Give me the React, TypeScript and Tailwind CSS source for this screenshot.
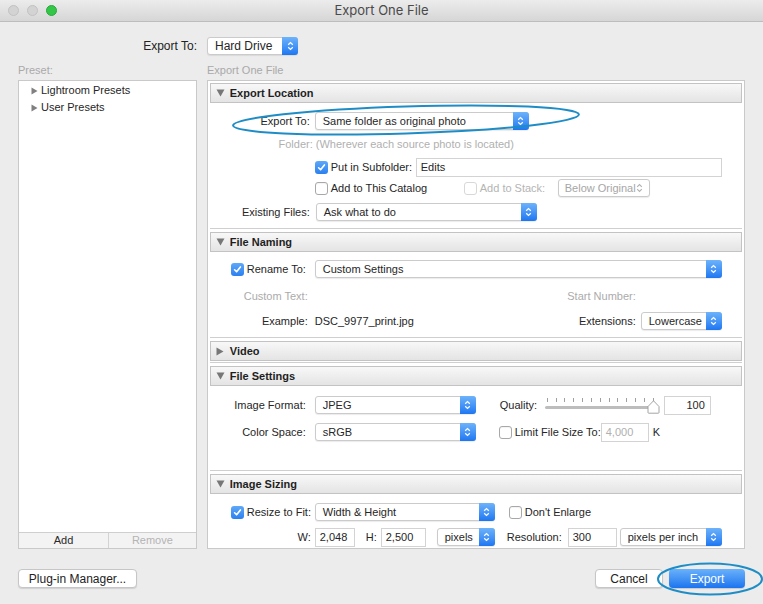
import React from "react";

const Check = ({ checked = false, disabled = false }: { checked?: boolean; disabled?: boolean }) =>
  checked ? (
    <div className="w-[13px] h-[13px] rounded-[3px] bg-gradient-to-b from-[#5ea8f9] to-[#2b80ef] flex items-center justify-center shrink-0">
      <svg width="9" height="9" viewBox="0 0 9 9">
        <path d="M1.6 4.8 L3.6 6.8 L7.4 1.9" stroke="white" strokeWidth="1.6" fill="none" strokeLinecap="round" strokeLinejoin="round" />
      </svg>
    </div>
  ) : disabled ? (
    <div className="w-[13px] h-[13px] rounded-[3px] bg-white border border-[#d8d8d8] shrink-0" />
  ) : (
    <div className="w-[13px] h-[13px] rounded-[3px] bg-white border border-[#a8a8a8] shadow-[inset_0_1px_1px_rgba(0,0,0,0.05)] shrink-0" />
  );

const Stepper = () => (
  <div className="w-[16px] -my-px -mr-px rounded-r-[3px] bg-gradient-to-b from-[#6db3fa] to-[#1c76f1] flex items-center justify-center shrink-0">
    <svg width="7" height="10" viewBox="0 0 7 10">
      <path d="M1.2 3.8 L3.5 1.6 L5.8 3.8 M1.2 6.2 L3.5 8.4 L5.8 6.2" stroke="white" strokeWidth="1.2" fill="none" />
    </svg>
  </div>
);

const GrayStepper = () => (
  <div className="w-[13px] flex items-center justify-start shrink-0">
    <svg width="7" height="10" viewBox="0 0 7 10">
      <path d="M1.2 3.8 L3.5 1.6 L5.8 3.8 M1.2 6.2 L3.5 8.4 L5.8 6.2" stroke="#b0b0b0" strokeWidth="1.1" fill="none" />
    </svg>
  </div>
);

const Popup = ({ text, className = "", disabled = false }: { text: string; className?: string; disabled?: boolean }) => (
  <div
    className={`flex h-[18px] items-stretch border border-[#cbcbcb] rounded-[3px] bg-white shadow-[0_1px_1px_rgba(0,0,0,0.08)] shrink-0 ${className}`}
  >
    <span
      className={`flex-1 flex items-center whitespace-nowrap ${disabled ? "text-[#a6a6a6] pl-[6px]" : "text-[#262626] pl-[7px] overflow-hidden"}`}
    >
      {text}
    </span>
    {disabled ? <GrayStepper /> : <Stepper />}
  </div>
);

const Field = ({ text, className = "", disabled = false }: { text: string; className?: string; disabled?: boolean }) => (
  <div
    className={`h-[19px] flex items-center border border-[#d3d3d3] bg-white shrink-0 px-[4px] ${disabled ? "text-[#b0b0b0]" : "text-[#262626]"} ${className}`}
  >
    {text}
  </div>
);

const Header = ({ title, open = true }: { title: string; open?: boolean }) => (
  <div className="h-[20px] border border-[#c3c3c3] bg-gradient-to-b from-[#f8f8f8] to-[#e4e4e4] flex items-center pl-[5px] font-bold text-[#1e1e1e]">
    <div className="w-[14px] flex items-center justify-start">
      {open ? (
        <svg width="9" height="8" viewBox="0 0 9 8">
          <path d="M0.5 0.5 L8.5 0.5 L4.5 7.5 Z" fill="#777" />
        </svg>
      ) : (
        <svg width="8" height="9" viewBox="0 0 8 9">
          <path d="M0.5 0.5 L7.5 4.5 L0.5 8.5 Z" fill="#777" />
        </svg>
      )}
    </div>
    <span>{title}</span>
  </div>
);

const Line = () => <div className="h-px bg-[#cfcfcf] mb-[3px]" />;

const Slider = () => (
  <div className="relative w-[115px] h-[18px] shrink-0">
    <div className="absolute left-0 right-[4px] top-[2px] flex justify-between px-[2px]">
      {Array.from({ length: 13 }).map((_, i) => (
        <div key={i} className="w-px h-[4px] bg-[#a0a0a0]" />
      ))}
    </div>
    <div className="absolute left-0 right-[6px] top-[10px] h-[3px] rounded-full bg-[#bdbdbd]" />
    <svg className="absolute right-[0px] top-[4px]" width="13" height="14" viewBox="0 0 13 14">
      <path d="M6.5 0.8 L12 6.5 L12 12.5 Q12 13.2 11.3 13.2 L1.7 13.2 Q1 13.2 1 12.5 L1 6.5 Z" fill="white" stroke="#9a9a9a" strokeWidth="0.9" />
    </svg>
  </div>
);

const Btn = ({ text, className = "" }: { text: string; className?: string }) => (
  <div
    className={`h-[19px] flex items-center justify-center bg-white border border-[#c6c6c6] rounded-[4px] shadow-[0_1px_1px_rgba(0,0,0,0.12)] text-[12px] text-[#222] ${className}`}
  >
    {text}
  </div>
);

export default function App() {
  return (
    <div className="relative w-[763px] h-[604px] bg-[#ececec] overflow-hidden font-['Liberation_Sans',_Arial,_sans-serif] text-[11px] text-[#262626]">
      {/* Title bar */}
      <div className="relative h-[22px] bg-gradient-to-b from-[#ececec] to-[#d6d6d6] border-b border-[#bdbdbd] flex items-center">
        <div className="flex items-center gap-[8px] pl-[8px]">
          <div className="w-[11px] h-[11px] rounded-full bg-[#d3d3d3] border border-[#c2c2c2]" />
          <div className="w-[11px] h-[11px] rounded-full bg-[#d3d3d3] border border-[#c2c2c2]" />
          <div className="w-[11px] h-[11px] rounded-full bg-[#33c748] border border-[#2aa83c]" />
        </div>
        <div className="absolute inset-0 flex items-center justify-center text-[13px] text-[#4a4a4a] font-['Inter',_sans-serif]">
          Export One File
        </div>
      </div>

      {/* Export To row */}
      <div className="flex items-center h-[18px] mt-[15px]">
        <div className="w-[197px] text-right text-[12px] text-[#222]">Export To:</div>
        <Popup text="Hard Drive" className="ml-[10px] w-[91px] text-[12px]" />
      </div>

      {/* Labels */}
      <div className="flex mt-[9px] h-[12px] px-[18px] text-[#a9a9a9] leading-[12px]">
        <div className="w-[189px]">Preset:</div>
        <div>Export One File</div>
      </div>

      {/* Main */}
      <div className="flex mt-[4px] px-[18px] h-[469px]">
        {/* Presets */}
        <div className="w-[179px] flex flex-col border border-[#c9c9c9] bg-white">
          <div className="flex-1 pl-[12px] pt-[1px]">
            {["Lightroom Presets", "User Presets"].map((t) => (
              <div key={t} className="h-[17px] flex items-center">
                <svg width="7" height="8" viewBox="0 0 7 8">
                  <path d="M0.5 0.5 L6.5 4 L0.5 7.5 Z" fill="#808080" />
                </svg>
                <span className="ml-[3px]">{t}</span>
              </div>
            ))}
          </div>
          <div className="h-[16px] flex border-t border-[#cfcfcf] bg-[#f3f3f3]">
            <div className="w-[90px] flex items-center justify-center border-r border-[#d3d3d3] text-[#2a2a2a]">Add</div>
            <div className="flex-1 flex items-center justify-center text-[#b4b4b4]">Remove</div>
          </div>
        </div>

        {/* Export panel */}
        <div className="ml-[10px] w-[539px] border border-[#c9c9c9] bg-white p-[2px] flex flex-col">
          {/* Export Location */}
          <Header title="Export Location" />
          <div className="h-[125px] pt-[9px]">
            <div className="flex h-[18px] items-center">
              <div className="w-[100px] text-right">Export To:</div>
              <Popup text="Same folder as original photo" className="ml-[5px] w-[214px]" />
            </div>
            <div className="flex h-[18px] items-center mt-[5px] text-[#b0b0b0]">
              <div className="w-[103px] text-right">Folder:</div>
              <div className="ml-[3px]">(Wherever each source photo is located)</div>
            </div>
            <div className="flex h-[18px] items-center mt-[5px] pl-[105px]">
              <Check checked />
              <span className="ml-[3px] w-[85px] whitespace-nowrap">Put in Subfolder:</span>
              <Field text="Edits" className="w-[306px]" />
            </div>
            <div className="flex h-[18px] items-center mt-[3px] pl-[105px]">
              <Check />
              <span className="ml-[3px] w-[133px] whitespace-nowrap">Add to This Catalog</span>
              <Check disabled />
              <span className="ml-[3px] w-[78px] text-[#b4b4b4] whitespace-nowrap">Add to Stack:</span>
              <Popup text="Below Original" disabled className="w-[92px]" />
            </div>
            <div className="flex h-[18px] items-center mt-[6px]">
              <div className="w-[100px] text-right">Existing Files:</div>
              <Popup text="Ask what to do" className="ml-[6px] w-[221px]" />
            </div>
          </div>
          <Line />

          {/* File Naming */}
          <Header title="File Naming" />
          <div className="h-[85px] pt-[8px]">
            <div className="flex h-[18px] items-center pl-[21px]">
              <Check checked />
              <span className="ml-[3px] w-[68px] whitespace-nowrap">Rename To:</span>
              <Popup text="Custom Settings" className="w-[407px]" />
            </div>
            <div className="flex h-[18px] items-center mt-[9px] text-[#ababab]">
              <div className="w-[98px] text-right">Custom Text:</div>
              <div className="w-[328px] text-right">Start Number:</div>
            </div>
            <div className="flex h-[18px] items-center mt-[7px]">
              <div className="w-[98px] text-right">Example:</div>
              <div className="ml-[7px] w-[150px]">DSC_9977_print.jpg</div>
              <div className="w-[171px] text-right">Extensions:</div>
              <Popup text="Lowercase" className="ml-[5px] w-[81px]" />
            </div>
          </div>
          <Line />

          {/* Video */}
          <Header title="Video" open={false} />
          <div className="h-px" />
          <Line />

          {/* File Settings */}
          <Header title="File Settings" />
          <div className="h-[84px] pt-[10px]">
            <div className="flex h-[18px] items-center">
              <div className="w-[96px] text-right">Image Format:</div>
              <Popup text="JPEG" className="ml-[9px] w-[161px]" />
              <span className="ml-[24px] w-[45px]">Quality:</span>
              <Slider />
              <Field text="100" className="ml-[4px] w-[47px] justify-end pr-[5px]" />
            </div>
            <div className="flex h-[18px] items-center mt-[9px]">
              <div className="w-[96px] text-right">Color Space:</div>
              <Popup text="sRGB" className="ml-[9px] w-[161px]" />
              <div className="ml-[23px]">
                <Check />
              </div>
              <span className="ml-[3px] w-[86px] whitespace-nowrap">Limit File Size To:</span>
              <Field text="4,000" disabled className="w-[48px]" />
              <span className="ml-[4px]">K</span>
            </div>
          </div>
          <Line />

          {/* Image Sizing */}
          <Header title="Image Sizing" />
          <div className="pt-[9px]">
            <div className="flex h-[18px] items-center pl-[21px]">
              <Check checked />
              <span className="ml-[3px] w-[68px] whitespace-nowrap">Resize to Fit:</span>
              <Popup text="Width & Height" className="w-[180px]" />
              <div className="ml-[14px]">
                <Check />
              </div>
              <span className="ml-[3px]">Don&apos;t Enlarge</span>
            </div>
            <div className="flex h-[18px] items-center mt-[7px]">
              <div className="w-[101px] text-right">W:</div>
              <Field text="2,048" className="ml-[4px] w-[40px]" />
              <span className="ml-[11px] w-[11px]">H:</span>
              <Field text="2,500" className="ml-[4px] w-[45px]" />
              <Popup text="pixels" className="ml-[11px] w-[58px]" />
              <div className="w-[67px] text-right">Resolution:</div>
              <Field text="300" className="ml-[6px] w-[49px]" />
              <Popup text="pixels per inch" className="ml-[3px] w-[102px]" />
            </div>
          </div>
        </div>
      </div>

      {/* Bottom buttons */}
      <div className="flex items-center justify-between px-[18px] mt-[20px]">
        <Btn text="Plug-in Manager..." className="w-[119px]" />
        <div className="flex items-center">
          <Btn text="Cancel" className="w-[68px]" />
          <div className="ml-[6px] w-[76px] h-[19px] flex items-center justify-center rounded-[4px] bg-gradient-to-b from-[#69b1fa] to-[#1a73ef] text-white text-[12px] shadow-[0_1px_1px_rgba(0,0,0,0.15)]">
            Export
          </div>
        </div>
      </div>

      {/* Annotation ellipses */}
      <svg className="absolute inset-0 pointer-events-none" width="763" height="604" viewBox="0 0 763 604">
        <ellipse cx="406" cy="120" rx="173" ry="13.5" transform="rotate(-1.8 406 120)" fill="none" stroke="#1e8dc6" strokeWidth="2" />
        <ellipse cx="710" cy="579" rx="52" ry="15.5" fill="none" stroke="#1e8dc6" strokeWidth="2" />
      </svg>
    </div>
  );
}
